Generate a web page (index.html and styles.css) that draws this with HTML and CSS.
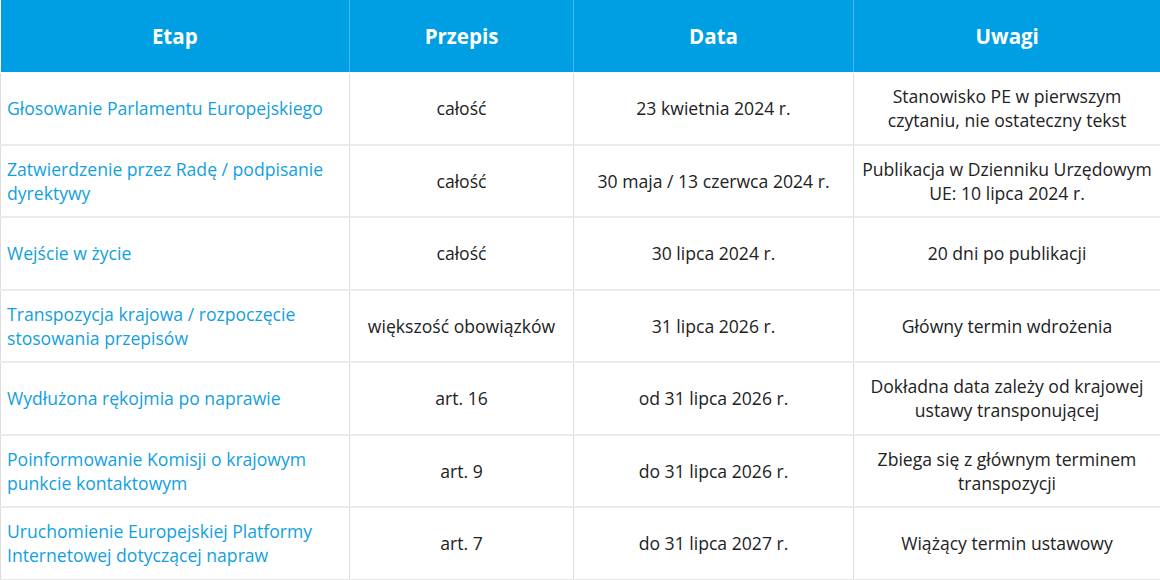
FILE: index.html
```html
<!DOCTYPE html>
<html lang="pl">
<head>
<meta charset="utf-8">
<link rel="stylesheet" href="styles.css">
</head>
<body>
<table class="timeline">
  <colgroup>
    <col class="c1"><col class="c2"><col class="c3"><col class="c4">
  </colgroup>
  <thead>
    <tr><th>Etap</th><th>Przepis</th><th>Data</th><th>Uwagi</th></tr>
  </thead>
  <tbody>
    <tr><td class="stage">Głosowanie Parlamentu Europejskiego</td><td>całość</td><td>23 kwietnia 2024 r.</td><td>Stanowisko PE w pierwszym czytaniu, nie ostateczny tekst</td></tr>
    <tr><td class="stage">Zatwierdzenie przez Radę / podpisanie dyrektywy</td><td>całość</td><td>30 maja / 13 czerwca 2024 r.</td><td>Publikacja w Dzienniku Urzędowym UE: 10 lipca 2024 r.</td></tr>
    <tr><td class="stage">Wejście w życie</td><td>całość</td><td>30 lipca 2024 r.</td><td>20 dni po publikacji</td></tr>
    <tr><td class="stage">Transpozycja krajowa / rozpoczęcie stosowania przepisów</td><td>większość obowiązków</td><td>31 lipca 2026 r.</td><td>Główny termin wdrożenia</td></tr>
    <tr><td class="stage">Wydłużona rękojmia po naprawie</td><td>art. 16</td><td>od 31 lipca 2026 r.</td><td>Dokładna data zależy od krajowej ustawy transponującej</td></tr>
    <tr><td class="stage">Poinformowanie Komisji o krajowym punkcie kontaktowym</td><td>art. 9</td><td>do 31 lipca 2026 r.</td><td>Zbiega się z głównym terminem transpozycji</td></tr>
    <tr><td class="stage">Uruchomienie Europejskiej Platformy Internetowej dotyczącej napraw</td><td>art. 7</td><td>do 31 lipca 2027 r.</td><td>Wiążący termin ustawowy</td></tr>
  </tbody>
</table>
</body>
</html>
```
FILE: styles.css
```css
html, body {
  margin: 0;
  padding: 0;
  background: #ffffff;
}
body {
  font-family: "Open Sans", "Liberation Sans", sans-serif;
  font-size: 17.6px;
  line-height: 24px;
  color: #222222;
}
.timeline {
  width: 1160px;
  border-collapse: collapse;
  table-layout: fixed;
}
.c1 { width: 349px; }
.c2 { width: 224px; }
.c3 { width: 280px; }
.c4 { width: 307px; }
.timeline th {
  background: #009fe3;
  color: #ffffff;
  font-weight: 700;
  font-size: 20.5px;
  height: 72px;
  padding: 0 6px;
  text-align: center;
  border-left: 1px solid #4db8ec;
  border-bottom: 1px solid #ffffff;
}
.timeline th:first-child { border-left: 0; }
.timeline td {
  height: 70.5px;
  padding: 0 6px;
  text-align: center;
  vertical-align: middle;
  border-left: 1px solid #dddddd;
  border-right: 1px solid #dddddd;
  border-bottom: 2px solid #ebebeb;
}
.timeline tbody tr:last-child td {
  border-bottom: 1px solid #e6e6e6;
}
.timeline td.stage {
  text-align: left;
  color: #13a0e0;
}
```
